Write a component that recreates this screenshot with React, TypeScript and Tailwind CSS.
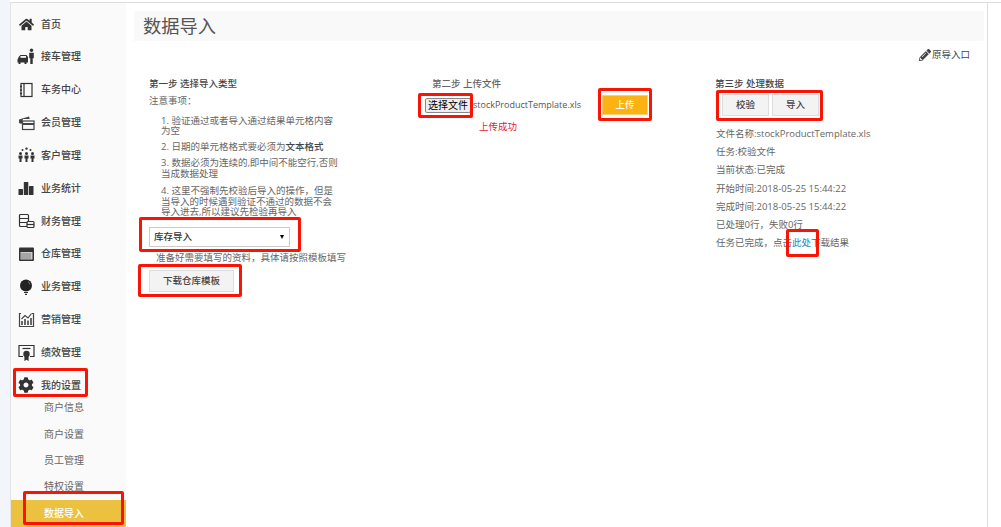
import { FaHome, FaCog, FaPencilAlt } from "react-icons/fa";
import type { ReactNode } from "react";

const font = { fontFamily: '"Open Sans", "Noto Sans CJK SC", sans-serif' };

function IconBook() {
  return (
    <svg width="16" height="16" viewBox="0 0 16 16" fill="none" stroke="#333" strokeWidth="1.2">
      <rect x="3" y="1.5" width="11" height="13" />
      <path d="M6 1.5v13" />
      <path d="M2 4.5h2M2 8h2M2 11.5h2" strokeWidth="1.6" />
    </svg>
  );
}

function IconCards() {
  return (
    <svg width="17" height="16" viewBox="0 0 17 16">
      <path d="M1 4.5 11 1.5l.8 2.5H5L3.5 9 1 8z" fill="#444" />
      <rect x="4.5" y="6" width="11.5" height="8.5" fill="none" stroke="#444" strokeWidth="1.2" />
      <rect x="4.5" y="8" width="11.5" height="2" fill="#444" />
    </svg>
  );
}

function IconPeople() {
  const people = [2.5, 8.5, 14.5];
  return (
    <svg width="17" height="16" viewBox="0 0 17 16" fill="#333">
      <circle cx="8.5" cy="1.6" r="1.2" />
      <circle cx="4.5" cy="3" r="1" />
      <circle cx="12.5" cy="3" r="1" />
      {people.map((x) => (
        <g key={x}>
          <circle cx={x} cy="6.5" r="1.5" />
          <path d={`M${x - 2} 8.5h4v3h-1v3.5h-2v-3.5h-1z`} />
        </g>
      ))}
    </svg>
  );
}

function IconBars() {
  return (
    <svg width="16" height="16" viewBox="0 0 16 16" fill="#333">
      <rect x="0.5" y="9" width="4.5" height="6" rx="0.5" />
      <rect x="5.8" y="2" width="4.5" height="13" rx="0.5" />
      <rect x="11" y="6" width="4.5" height="9" rx="0.5" />
    </svg>
  );
}

function IconStack() {
  return (
    <svg width="17" height="16" viewBox="0 0 17 16" fill="none" stroke="#333" strokeWidth="1.2">
      <rect x="1.5" y="1.5" width="9" height="12" rx="1" />
      <path d="M1.5 5.5h9M1.5 9.5h9" />
      <rect x="9" y="8.5" width="7" height="6" rx="1" fill="#fafafa" />
      <path d="M9 11.5h7" />
    </svg>
  );
}

function IconKeyboard() {
  return (
    <svg width="17" height="16" viewBox="0 0 17 16">
      <rect x="1" y="1.5" width="15" height="13.5" rx="1" fill="#333" />
      <rect x="2.5" y="6" width="12" height="7.5" fill="#ccc" />
      <path d="M3.5 8h10M3.5 10h10M3.5 12h10" stroke="#333" strokeWidth="1" strokeDasharray="1 1" />
    </svg>
  );
}

function IconBulb() {
  return (
    <svg width="14" height="16" viewBox="0 0 14 16">
      <circle cx="7" cy="6.5" r="6" fill="#222" />
      <path d="M9 2.5a3.5 3.5 0 0 1 1.8 3" fill="none" stroke="#888" strokeWidth="0.8" />
      <path d="M5 13.5h4M6 15.3h2" stroke="#333" strokeWidth="1.2" />
    </svg>
  );
}

function IconMarketing() {
  return (
    <svg width="17" height="16" viewBox="0 0 17 16" fill="none" stroke="#444" strokeWidth="1.2">
      <path d="M3 1.5H1.5v13h14v-13H14" />
      <path d="M4 13V9M7 13V7M10 13V8.5M13 13V6" strokeWidth="1.6" />
      <path d="M3.5 7 7 3.5l3 2.5 3.5-4.5" />
    </svg>
  );
}

function IconCert() {
  return (
    <svg width="17" height="17" viewBox="0 0 17 17" fill="none" stroke="#333" strokeWidth="1.2">
      <path d="M5 12.5H1v-11h15v11h-4" />
      <path d="M4.5 4.5h8" />
      <circle cx="8.5" cy="10" r="2.6" fill="#333" />
      <path d="M7 12.5V16l1.5-1 1.5 1v-3.5" fill="#333" />
    </svg>
  );
}

// car seen from the side with a person standing next to it
function IconCarPerson() {
  return (
    <svg width="18" height="17" viewBox="0 0 18 17" fill="#333">
      <path d="M0.5 11.5 2 8.5 3.5 7h6L11 9v5.5H9.5v1.5h-2v-1.5H3.5v1.5h-2v-1.5h-1z" />
      <rect x="3.5" y="8" width="5.5" height="1.8" fill="#fafafa" />
      <circle cx="14.5" cy="2.2" r="1.7" />
      <path d="M12.2 4.8h4.6v5.5h-1.1V16h-2.4v-5.7h-1.1z" />
    </svg>
  );
}

type NavItem = { label: string; icon: ReactNode };

const navItems: NavItem[] = [
  { label: "首页", icon: <FaHome size={15} color="#333" /> },
  { label: "接车管理", icon: <IconCarPerson /> },
  { label: "车务中心", icon: <IconBook /> },
  { label: "会员管理", icon: <IconCards /> },
  { label: "客户管理", icon: <IconPeople /> },
  { label: "业务统计", icon: <IconBars /> },
  { label: "财务管理", icon: <IconStack /> },
  { label: "仓库管理", icon: <IconKeyboard /> },
  { label: "业务管理", icon: <IconBulb /> },
  { label: "营销管理", icon: <IconMarketing /> },
  { label: "绩效管理", icon: <IconCert /> },
  { label: "我的设置", icon: <FaCog size={16} color="#333" /> },
];

const subItems = ["商户信息", "商户设置", "员工管理", "特权设置"];

const statusLines = [
  "文件名称:stockProductTemplate.xls",
  "任务:校验文件",
  "当前状态:已完成",
  "开始时间:2018-05-25 15:44:22",
  "完成时间:2018-05-25 15:44:22",
  "已处理0行，失败0行",
];

function RedBox({ className }: { className: string }) {
  return <div className={`absolute rounded-[2px] border-[3px] border-[#fa1405] ${className}`} />;
}

function Sidebar() {
  return (
    <aside className="flex w-[116px] shrink-0 flex-col border-l border-[#e4e4e4] bg-[#fafafa] pt-[4.6px] text-[10px] text-[#444]">
      {navItems.map((item) => (
        <div key={item.label} className="flex h-[32.85px] shrink-0 items-center pl-[6px] font-medium">
          <span className="flex w-[18px] justify-center">{item.icon}</span>
          <span className="ml-[6px]">{item.label}</span>
        </div>
      ))}
      <div className="-mt-[7px]">
        {subItems.map((item) => (
          <div key={item} className="flex h-[26.3px] items-center pl-[33px] text-[#666]">
            {item}
          </div>
        ))}
      </div>
      <div className="flex h-[27px] shrink-0 items-center bg-[#ecc13f] pl-[33px] font-medium text-white">数据导入</div>
    </aside>
  );
}

function StepOne() {
  return (
    <div className="w-[283px] pl-[15px]">
      <h3 className="h-[17px] font-medium leading-[17px] text-[#444]">第一步 选择导入类型</h3>
      <p className="mt-[1px] leading-[15px]">注意事项：</p>
      <ol className="mt-[8px] w-[190px] pl-[12px] leading-[10.7px]">
        <li className="mb-[5px]">1. 验证通过或者导入通过结果单元格内容为空</li>
        <li className="mb-[5.3px]">
          2. 日期的单元格格式要必须为<b className="font-medium text-[#444]">文本格式</b>
        </li>
        <li className="mb-[6.6px]">3. 数据必须为连续的,即中间不能空行,否则当成数据处理</li>
        <li>4. 这里不强制先校验后导入的操作，但是当导入的时候遇到验证不通过的数据不会导入进去,所以建议先检验再导入</li>
      </ol>
      <div className="mt-[9.3px] flex h-[20px] w-[141px] items-center justify-between border border-[#ccc] bg-white pl-[4px] pr-[5px] font-medium text-[#333]">
        <span>库存导入</span>
        <span className="h-0 w-0 border-x-[2.5px] border-t-[4px] border-x-transparent border-t-black" />
      </div>
      <p className="mt-[4px] pl-[7px] leading-[14px]">准备好需要填写的资料，具体请按照模板填写</p>
      <button className="mt-[5px] flex h-[22px] w-[85px] items-center justify-center border border-[#ddd] bg-[#f3f3f3] font-medium text-[#444]">
        下载仓库模板
      </button>
    </div>
  );
}

function StepTwo() {
  return (
    <div className="w-[283px] pl-[15px]">
      <h3 className="h-[17px] font-medium leading-[17px] text-[#666]">第二步 上传文件</h3>
      <div className="-ml-[7px] mt-[3.5px] flex h-[20px] items-center">
        <button className="flex h-[15px] w-[46px] items-center justify-center rounded-[2px] border border-[#888] bg-[#eee] text-[10px] text-black">
          选择文件
        </button>
        <span className="ml-[2px] text-[9px] text-[#555]">stockProductTemplate.xls</span>
        <button className="ml-[21px] flex h-[20px] w-[46px] items-center justify-center border border-[#f4d27a] bg-[#fdb213] font-medium text-white">
          上传
        </button>
      </div>
      <p className="ml-[47px] mt-[4.5px] leading-[14px] text-[#e8202f]">上传成功</p>
    </div>
  );
}

function StepThree() {
  return (
    <div className="flex-1 pl-[15px]">
      <h3 className="h-[17px] font-medium leading-[17px] text-[#444]">第三步 处理数据</h3>
      <div className="ml-[7px] mt-[2.5px] flex gap-[3px]">
        <button className="flex h-[22px] w-[47px] items-center justify-center border border-[#ddd] bg-[#f3f3f3] font-medium text-[#444]">
          校验
        </button>
        <button className="flex h-[22px] w-[47px] items-center justify-center border border-[#ddd] bg-[#f3f3f3] font-medium text-[#444]">
          导入
        </button>
      </div>
      <div className="ml-[1px] mt-[9px] leading-[18.2px]">
        {statusLines.map((line) => (
          <p key={line}>{line}</p>
        ))}
        <p>
          任务已完成，点击<span className="text-[#1a7fc9]">此处</span>下载结果
        </p>
      </div>
    </div>
  );
}

export default function App() {
  return (
    <div className="relative flex h-[527px] w-[1001px] overflow-hidden bg-white" style={font}>
      <div className="w-[10px] shrink-0 bg-[#f2f6fb]" />
      <div className="flex flex-1 flex-col">
        <div className="h-[3px] shrink-0 border-b border-[#ddd] bg-white" />
        <div className="flex min-h-0 flex-1">
          <Sidebar />
          <main className="w-[862px] shrink-0 border-r border-[#ddd] pl-[8px] pr-[3px] pt-[8px] text-[9.5px] text-[#666]">
            <h1 className="h-[30px] bg-[#f9f9f9] pl-[9px] text-[18.25px] leading-[30px] text-[#555]">数据导入</h1>
            <div className="mt-[6px] flex justify-end pr-[14px] text-[#444]">
              <span className="flex items-center gap-[1px] leading-[16px]">
                <FaPencilAlt size={12} color="#444" />
                原导入口
              </span>
            </div>
            <div className="mt-[11.5px] flex">
              <StepOne />
              <StepTwo />
              <StepThree />
            </div>
          </main>
        </div>
      </div>

      <RedBox className="left-[13px] top-[368px] h-[29px] w-[75px]" />
      <RedBox className="left-[23px] top-[491px] h-[34px] w-[101px]" />
      <RedBox className="left-[139px] top-[217px] h-[35px] w-[162px]" />
      <RedBox className="left-[138px] top-[264px] h-[33px] w-[104px]" />
      <RedBox className="left-[418px] top-[93px] h-[25px] w-[55px]" />
      <RedBox className="left-[598px] top-[88px] h-[33px] w-[54px]" />
      <RedBox className="left-[716px] top-[90px] h-[31px] w-[107px]" />
      <RedBox className="left-[786px] top-[229px] h-[28px] w-[33px]" />
    </div>
  );
}
